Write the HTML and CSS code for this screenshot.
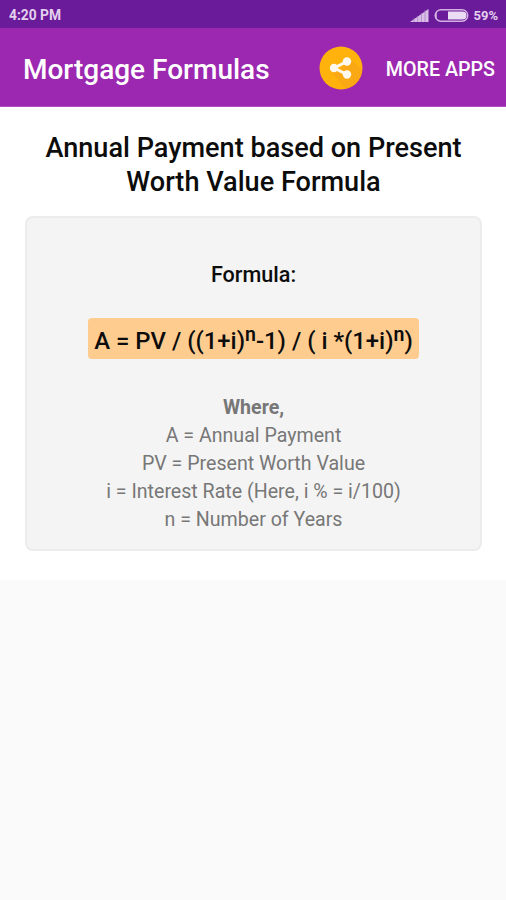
FILE: index.html
```html
<!DOCTYPE html>
<html lang="en">
<head>
<meta charset="utf-8">
<title>Mortgage Formulas</title>
<link rel="stylesheet" href="styles.css">
</head>
<body>
<div class="status">
  <span class="time">4:20 PM</span>
  <svg class="signal" width="19" height="13" viewBox="0 0 19 13"><path d="M0 13 18.500 0v13z" fill="#d9bfe6"/><path d="M4 9v4M7.700 7v6M11.400 4v9M15 1v12" stroke="#a777c3" stroke-width=".7"/></svg>
  <svg class="battery" width="35" height="13" viewBox="0 0 35 13"><rect x="1.200" y=".8" width="32.600" height="11.400" rx="5.700" fill="none" stroke="#d3b2e2" stroke-width="1.400"/><path d="M14 2.500h14.500a4 4 0 0 1 0 8H14z" fill="#eadcf2"/><path d="M2.800 3v7a4 4 0 0 1 0-7z" fill="#d3b2e2"/></svg>
  <span class="percent">59%</span>
</div>
<header class="bar">
  <h1>Mortgage Formulas</h1>
  <svg class="share" width="44" height="44" viewBox="0 0 44 44"><defs><clipPath id="disc"><circle cx="22" cy="22" r="21.500"/></clipPath></defs><circle cx="22" cy="22" r="21.500" fill="#ffb20c"/><path d="M31 12 46 27v20H30L12 25l10-2z" fill="#f7a51a" opacity=".65" clip-path="url(#disc)"/><g fill="#fff8ee"><path d="M28 15.500 15 22l13 6.500" fill="none" stroke="#fff8ee" stroke-width="3"/><circle cx="28" cy="15.500" r="4.200"/><circle cx="15" cy="22" r="4.200"/><circle cx="28" cy="28.500" r="4.200"/></g></svg>
  <span class="more">MORE APPS</span>
</header>
<main>
  <h2>Annual Payment based on Present<br>Worth Value Formula</h2>
  <section class="card">
    <h3>Formula:</h3>
    <div class="formula"><span>A = PV / ((1+i)<sup>n</sup>-1) / ( i *(1+i)<sup>n</sup>)</span></div>
    <div class="where">
      <b>Where,</b>
      <span>A = Annual Payment</span>
      <span>PV = Present Worth Value</span>
      <span>i = Interest Rate (Here, i % = i/100)</span>
      <span>n = Number of Years</span>
    </div>
  </section>
</main>
</body>
</html>
```
FILE: styles.css
```css
* { box-sizing: border-box; }
body { margin: 0; height: 900px; background: #fafafa; font-family: Roboto, sans-serif; overflow: hidden; }
.status { height: 28px; background: #6a1b9a; color: #e3d0ed; display: flex; align-items: center; padding: 2px 8px 0 9px; font-size: 13px; font-weight: 700; }
.time { font-size: 13.8px; }
.signal { margin-left: auto; }
.battery { margin: 0 4px 0 5px; }
.bar { height: 79px; background: #9c27b0; color: #fff; display: flex; align-items: center; padding: 0 11px 0 23px; border-bottom: 1px solid #b050c0; }
.bar h1 { margin: 4px 0 0; font-size: 28px; font-weight: 500; white-space: nowrap; }
.share { margin-left: auto; margin-top: 1px; }
.more { margin: 5px 0 0 23px; font-size: 19.7px; font-weight: 500; white-space: nowrap; }
main { height: 473px; background: #fff; padding: 24px 24px 0; }
h2 { margin: 0 -1px 0 0; font-size: 27.1px; line-height: 34px; font-weight: 500; color: #0c0c0c; text-align: center; white-space: nowrap; }
.card { margin: 17px 0 0 1px; height: 335px; width: 457px; border: 2px solid #ececec; border-radius: 8px; background: #f4f4f4; display: flex; flex-direction: column; align-items: center; padding-top: 44px; }
h3 { margin: 0; font-size: 21.6px; line-height: 26px; font-weight: 500; color: #0c0c0c; }
.formula { margin-top: 30px; width: 331px; height: 41px; padding-top: 4px; border-radius: 4px; background: #ffcc90; display: flex; align-items: center; justify-content: center; font-size: 23.9px; font-weight: 500; color: #0c0c0c; white-space: nowrap; }
sup { font-size: 19.5px; line-height: 0; font-weight: 600; vertical-align: 8px; }
.where { margin-top: 35px; display: flex; flex-direction: column; align-items: center; font-size: 19.6px; line-height: 28px; color: #777; white-space: nowrap; }
.where b { font-size: 19.6px; font-weight: 700; }
```
